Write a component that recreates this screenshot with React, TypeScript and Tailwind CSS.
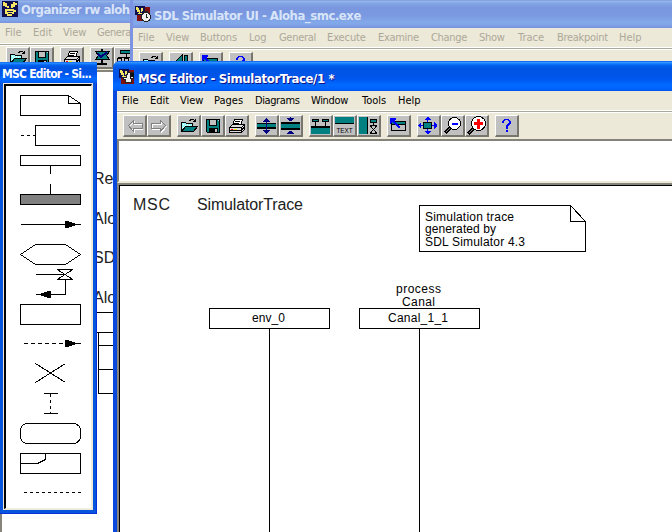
import React from "react";

type Item = { label: string; cls: string };

const activeTitle =
  "bg-[linear-gradient(#0058ee_0%,#3593ff_5%,#127dff_9%,#0262ee_15%,#0054e3_25%,#0055eb_56%,#005bf5_66%,#026afe_78%,#0062ff_94%,#0052e6_100%)]";
const idleTitle =
  "bg-[linear-gradient(#7e9ee3_0%,#97b4e9_6%,#82a5e4_12%,#7996de_28%,#7b99e1_56%,#82a9e9_80%,#80a5e7_88%,#7b96e1_96%,#7a93df_100%)]";
const face = "bg-[#ece9d8]";

function Menu({ items, dim, pad }: { items: Item[]; dim?: boolean; pad: string }) {
  return (
    <div
      className={`flex shrink-0 items-center overflow-hidden whitespace-nowrap font-['DejaVu_Sans_Condensed','DejaVu_Sans',sans-serif] text-[11px] [font-stretch:condensed] ${face} ${pad} ${
        dim ? "text-[#aca899]" : "text-black"
      }`}
    >
      {items.map((m) => (
        <span key={m.label} className={`shrink-0 ${m.cls}`}>
          {m.label}
        </span>
      ))}
    </div>
  );
}

function Rule() {
  return <div className="h-[3px] shrink-0 border-y border-white bg-[#aca899]" />;
}

function Btn({ children }: { children: React.ReactNode }) {
  return (
    <div className="h-[22px] w-6 shrink-0 border-t border-r-2 border-b-2 border-l border-t-white border-r-[#77756c] border-b-[#77756c] border-l-white bg-[#c0c0c0]">
      <svg className="-mt-px -ml-px block h-[22px] w-6" viewBox="0 0 24 22" shapeRendering="crispEdges">
        {children}
      </svg>
    </div>
  );
}

const Back = () => (
  <g fill="none">
    <path d="M6.500 11.500l5-5v3h8v5h-8v3z" stroke="#fff" />
    <path d="M5.500 10.500l5-5v3h9v5h-9v3z" stroke="#808080" />
  </g>
);
const Forward = () => (
  <g fill="none">
    <path d="M19.500 11.500l-5-5v3h-9v5h9v3z" stroke="#fff" />
    <path d="M18.500 10.500l-5-5v3h-9v5h9v3z" stroke="#808080" />
  </g>
);
const Open = () => (
  <g>
    <path d="M4.500 16.500v-9h4l1 1h6v3" fill="#9ff" stroke="#000" />
    <path d="M4.500 16.500l4-5h12l-4 5z" fill="#008080" stroke="#000" />
    <path d="M12.500 5.500l2-1h2l2 2M18.500 4v3M16 6.500h3" fill="none" stroke="#000" />
    <path d="M6 9h1v1H6zM8 10h1v1H8zM10 9h1v1h-1zM6 12h1v1H6zM12 10h1v1h-1z" fill="#fff" />
  </g>
);
const Save = () => (
  <g>
    <path d="M5.500 4.500h13v13H6.500l-1-1z" fill="#008080" stroke="#000" />
    <path d="M8.500 4.500h7v6h-7z" fill="#c0c0c0" stroke="#000" />
    <path d="M8 13h9v5H8z" fill="#000" />
    <path d="M14 14h2v3h-2zM17 5h1v1h-1z" fill="#c0c0c0" />
  </g>
);
const Print = () => (
  <g stroke="#000">
    <path d="M7.500 10.500l2-6h8l-2 6z" fill="#fff" />
    <path d="M10 6.500h5M9 8.500h5" />
    <path d="M4.500 12.500l3-3h12v5l-3 3h-12z" fill="#ddd" />
    <path d="M4.500 12.500h12l3-3M16.500 12.500v5M5 15.500h11l3-3" fill="none" />
    <path d="M6 14.500h2" stroke="#f00" />
    <path d="M9 14.500h3" stroke="#ff0" />
  </g>
);
const Narrow = () => (
  <g>
    <path d="M2 8h19v6H2z" fill="#000" />
    <path d="M2 9h19v3H2z" fill="#008080" />
    <path d="M11 3h1v16h-1zM10 4h3v1h-3zM9 5h5v1H9zM8 6h7v1H8zM8 15h7v1H8zM9 16h5v1H9zM10 17h3v1h-3z" fill="#000080" />
  </g>
);
const Widen = () => (
  <g>
    <path d="M2 7h19v8H2z" fill="#000" />
    <path d="M2 9h19v4H2z" fill="#008080" />
    <path d="M11 2h1v4h-1zM8 3h7v1H8zM9 4h5v1H9zM10 5h3v1h-3zM11 16h1v3h-1zM10 16h3v1h-3zM9 17h5v1H9zM8 18h7v1H8z" fill="#000080" />
  </g>
);
const Instances = () => (
  <g>
    <path d="M3.500 4.500h6v2h-6zM13.500 4.500h6v2h-6z" fill="#008080" stroke="#000" />
    <path d="M6.500 7v4M16.500 7v4" stroke="#000" />
    <path d="M2 13h19v6H2z" fill="#008080" />
    <path d="M2 11h19v2H2z" />
  </g>
);
const TextMode = () => (
  <g>
    <path d="M2 2h19v6H2z" fill="#008080" />
    <path d="M2 8h19v1H2z" />
    <text x="3.500" y="17.500" fontSize="7.500" fontFamily="Liberation Sans, sans-serif" textLength="16" lengthAdjust="spacingAndGlyphs">
      TEXT
    </text>
  </g>
);
const Side = () => (
  <g>
    <path d="M2 2h8v17H2z" fill="#008080" />
    <path d="M10 2h1v17h-1z" />
    <path d="M13.500 4.500h6v3h-6z" fill="#008080" stroke="#000" />
    <path d="M16.500 8v2M13 10.500h7M13 18.500h7M13.500 11l6 7M19.500 11l-6 7" stroke="#000" fill="none" />
  </g>
);
const Jump = () => (
  <g>
    <path d="M4.500 6.500h14v9h-14z" fill="#c0c0c0" stroke="#000" />
    <path d="M5 7h13v2H5z" fill="#008080" />
    <path d="M5 9.500h13" stroke="#000" />
    <path d="M3 3h6v1L7 6l6 5v2h-1L5 7 4 9H3z" fill="#00f" />
  </g>
);
const Fit = () => (
  <g>
    <path d="M6.500 7.500h8v6h-8z" fill="#008080" stroke="#000" />
    <path d="M10 2h1l3 3h-3v2h-1V5H7zM10 14h1v2h3l-3 3h-1l-3-3h3zM1 10l3-3v3h2v1H4v3l-3-3zM20 10l-3-3v3h-2v1h2v3l3-3z" fill="#00f" />
  </g>
);
const ZoomOut = () => (
  <g>
    <path d="M4 18l5-5" stroke="#000" strokeWidth="3" />
    <path d="M4.500 17.500l4-4" stroke="#808080" />
    <circle cx="13.500" cy="8.500" r="6" fill="#fff" stroke="#000" />
    <path d="M11 8h6v2h-6z" fill="#00f" />
  </g>
);
const ZoomIn = () => (
  <g>
    <path d="M3 19l6-6" stroke="#000" strokeWidth="3" />
    <path d="M3.500 18.500l5-5" stroke="#808080" />
    <circle cx="13.500" cy="8.500" r="7" fill="#fff" stroke="#000" />
    <path d="M12 4h3v3h3v3h-3v4h-3v-4H9V7h3z" fill="#f00" />
  </g>
);
const Help = () => (
  <path d="M8 5h1V4h5v1h1v1h1v3h-1v1h-1v1h-1v3h-2v-4h1V9h1V8h1V6h-1V5h-3v1H9v2H7V6h1zM11 15h2v2h-2z" fill="#00f" />
);
const Check = () => (
  <g>
    <path d="M5.500 4.500h14l-3 4 3 4h-14l3-4z" fill="#008080" stroke="#000" />
    <path d="M12 2v3M12 13v4M7 17h10" stroke="#000" strokeWidth="2" />
    <path d="M8 7l3 3 6-5" stroke="#000080" strokeWidth="2" fill="none" />
  </g>
);
const Tree = () => (
  <g stroke="#000" fill="#008080">
    <path d="M6.500 3.500h11v3h-11zM12 7v3M4 10.500h16" />
    <path d="M3.500 11.500h4v4h-4zM10.500 11.500h4v4h-4z" fill="#c0c0c0" />
  </g>
);
const Step = () => (
  <g>
    <path d="M13 3v15L5 11z" fill="#008080" stroke="#000" />
    <path d="M15.500 3.500h3v14h-3z" fill="#008080" stroke="#000" />
  </g>
);

function AppIcon({ kind }: { kind: "hand" | "clock" | "face" }) {
  return (
    <svg className="h-4 w-4 shrink-0" viewBox="0 0 16 16" shapeRendering="crispEdges">
      {kind === "hand" ? (
        <g>
          <path d="M0 0h16v16H0z" fill="#101050" />
          <path d="M1 1h2v1h2v2h2v3H5V6H3V5H1zM9 3h2V1h2v1h2v2h-2v2h-2v1H9zM3 8h9v1h2v2h-2v2h-2v2H5v-2H3z" fill="#f5e663" />
          <path d="M5 10.500h6M6 12.500h4M5 3h1v1H5z" stroke="#101050" />
        </g>
      ) : (
        <g>
          <path d="M0 0h10v9H0z" fill="#101050" />
          <path d="M10 1h5v14H2V9h8z" fill="#801010" />
          <path d="M1 1h2v1h1v2h1v3H4V6H2V4H1zM6 2h2v3H7v1H6zM3 7h5v1H3z" fill="#f5e663" />
          {kind === "clock" ? (
            <g>
              <circle cx="11" cy="11" r="4.500" fill="#eee" stroke="#222" />
              <path d="M11 8v3h2M9 5h4M11 5v2" stroke="#222" fill="none" />
            </g>
          ) : (
            <g>
              <path d="M8.500 3.500h6v6h-2v4h-6v-3h-2v-2h3z" fill="#eee" stroke="#222" />
              <path d="M11 4h4v4h-3v2h-1z" fill="#111" />
            </g>
          )}
        </g>
      )}
    </svg>
  );
}

const titleFont =
  "whitespace-nowrap font-['DejaVu_Sans_Condensed','DejaVu_Sans',sans-serif] font-bold [font-stretch:condensed]";

const mainMenu: Item[] = [
  { label: "File", cls: "w-7" },
  { label: "Edit", cls: "w-[30px]" },
  { label: "View", cls: "w-[34px]" },
  { label: "Pages", cls: "w-[41px]" },
  { label: "Diagrams", cls: "w-[56px] tracking-[-0.4px]" },
  { label: "Window", cls: "w-[51px] tracking-[-0.35px]" },
  { label: "Tools", cls: "w-9" },
  { label: "Help", cls: "" },
];
const simMenu: Item[] = [
  { label: "File", cls: "w-7" },
  { label: "View", cls: "w-[34px]" },
  { label: "Buttons", cls: "w-[49px] tracking-[-0.2px]" },
  { label: "Log", cls: "w-[30px]" },
  { label: "General", cls: "w-12 tracking-[-0.3px]" },
  { label: "Execute", cls: "w-[51px] tracking-[-0.1px]" },
  { label: "Examine", cls: "w-[53px] tracking-[-0.3px]" },
  { label: "Change", cls: "w-12 tracking-[-0.3px]" },
  { label: "Show", cls: "w-[39px] tracking-[-0.3px]" },
  { label: "Trace", cls: "w-[39px]" },
  { label: "Breakpoint", cls: "w-[62px] tracking-[-0.3px]" },
  { label: "Help", cls: "" },
];
const orgMenu: Item[] = [
  { label: "File", cls: "w-7" },
  { label: "Edit", cls: "w-[30px]" },
  { label: "View", cls: "w-[34px]" },
  { label: "General", cls: "tracking-[-0.4px]" },
];

function Organizer() {
  return (
    <section className="absolute top-0 left-0 flex h-[532px] w-[140px] flex-col overflow-hidden bg-[#ece9d8]">
      <div className={`flex h-[23px] shrink-0 items-start gap-[3px] pt-px pl-0.5 ${idleTitle}`}>
        <AppIcon kind="hand" />
        <span className={`${titleFont} mt-px text-[13px] leading-4 tracking-[-0.55px] text-[#d8e4f8]`}>Organizer rw aloh</span>
      </div>
      <Menu items={orgMenu} dim pad="h-5 pl-[5px]" />
      <Rule />
      <div className="flex h-6 shrink-0 pt-px pl-1.5">
        <Btn><Open /></Btn>
        <Btn><Save /></Btn>
        <div className="w-1.5" />
        <Btn><Print /></Btn>
        <div className="w-1.5" />
        <Btn><Check /></Btn>
        <Btn><Tree /></Btn>
      </div>
      <div className="flex-1 border-t-2 border-l-2 border-[#85837a] bg-white">
        <svg
          className="block h-[460px] w-[138px] font-['Liberation_Sans',sans-serif] text-[16px]"
          viewBox="2 72 138 460"
          fill="none"
          stroke="#000"
          shapeRendering="crispEdges"
        >
          <g fill="#222" stroke="none">
            <text x="93" y="184">Re</text>
            <text x="93" y="224">Alo</text>
            <text x="93" y="263">SD</text>
            <text x="93" y="303">Alo</text>
          </g>
          <path d="M95 312.500h40M95 332.500h40M98.500 332v61.500H140M98 345.500h40M98 369.500h40" />
        </svg>
      </div>
    </section>
  );
}

function Simulator() {
  return (
    <section className="absolute top-0 left-[130px] flex h-[80px] w-[542px] flex-col overflow-hidden border-l-[3px] border-[#7b93e0] bg-[#ece9d8]">
      <div className={`flex h-7 shrink-0 items-start gap-[3px] pt-1.5 pl-0.5 ${idleTitle}`}>
        <AppIcon kind="clock" />
        <span className={`${titleFont} mt-0.5 text-[13px] leading-4 tracking-[-0.47px] text-[#d8e4f8]`}>SDL Simulator UI - Aloha_smc.exe</span>
      </div>
      <Menu items={simMenu} dim pad="h-[19px] pt-0.5 pl-[5px]" />
      <Rule />
      <div className="flex gap-1.5 pt-0.5 pl-1.5">
        <Btn><Open /></Btn>
        <Btn><Step /></Btn>
        <Btn><Jump /></Btn>
        <Btn><Help /></Btn>
      </div>
    </section>
  );
}

function Palette() {
  return (
    <section className="absolute top-[62px] left-0 flex h-[452px] w-[97px] flex-col bg-[#0831d9]">
      <div className={`h-[21px] shrink-0 overflow-hidden pl-[2px] ${activeTitle}`}>
        <span className={`${titleFont} block text-[12px] leading-[24px] tracking-[-0.75px] text-white`}>MSC Editor - Si...</span>
      </div>
      <div className="mr-[1px] mb-[1px] flex flex-1 border-r-[3px] border-b-[3px] border-l-[3px] border-[#0855dd]">
        <div className="flex-1 border border-[#ece9d8] bg-white">
          <div className="h-full border-t-2 border-r border-b border-l-2 border-t-black border-r-[#f1efe2] border-b-[#f1efe2] border-l-black">
            <svg className="block h-[421px] w-[85px]" viewBox="6 86 85 421" fill="none" stroke="#000" shapeRendering="crispEdges">
              <path d="M20.500 95.500h48l12 8v12h-60zM68.500 95.500v8h12" />
              <path d="M80 125.500H35.500v20H80" />
              <path d="M21 135.500h14" strokeDasharray="3 3" />
              <path d="M20.500 155.500h60v10h-60zM50.500 166v8M50.500 184v10" />
              <path d="M20.500 194.500h60v10h-60z" fill="#808080" />
              <path d="M21 224.500h60" />
              <path d="M65 221v7h3l8-3v-1l-8-3z" fill="#000" stroke="none" />
              <path d="M20.500 254.500l15-10h30l15 10-15 10h-30z" />
              <path d="M36 274.500h29M57 269.500h16M57 279.500h16M58 270l14 9M72 270l-14 9M65.500 279v15.500H36" />
              <path d="M51 291v7h-3l-8-3v-1l8-3z" fill="#000" stroke="none" />
              <path d="M20.500 304.500h60v20h-60z" />
              <path d="M24 343.500h57" strokeDasharray="4 3" />
              <path d="M65 340v7h3l8-3h5v-1h-5l-8-3z" fill="#000" stroke="none" />
              <path d="M35.500 363.500l30 19M65.500 363.500l-30 19" />
              <path d="M44 393.500h14M44 413.500h14" />
              <path d="M50.500 394v19" strokeDasharray="3 3" />
              <rect x="20.500" y="423.500" width="60" height="20" rx="7" />
              <path d="M20.500 453.500h60v20h-60zM20.500 463.500h17l8-4v-6" />
              <path d="M24 492.500h57" strokeDasharray="3 3" />
            </svg>
          </div>
        </div>
      </div>
    </section>
  );
}

function Diagram() {
  return (
    <svg
      className="block h-[346px] w-[552px] font-['Liberation_Sans',sans-serif] text-[12px]"
      viewBox="120 186 552 346"
      fill="none"
      stroke="#000"
      shapeRendering="crispEdges"
    >
      <path d="M419.500 205.500h151l15 16v30h-166zM570.500 205.500v16h15" />
      <path d="M209.500 308.500h120v20h-120zM359.500 308.500h120v20h-120zM269.500 329v210M419.500 329v210" />
      <g fill="#000" stroke="none">
        <text x="133" y="210" fontSize="16" textLength="37" fill="#222">MSC</text>
        <text x="197" y="210" fontSize="16" textLength="106" fill="#222">SimulatorTrace</text>
        <text x="425" y="221" textLength="89">Simulation trace</text>
        <text x="425" y="233" textLength="71">generated by</text>
        <text x="425" y="246" textLength="100">SDL Simulator 4.3</text>
        <text x="252" y="322" textLength="33">env_0</text>
        <text x="396" y="293" textLength="45">process</text>
        <text x="402" y="306" textLength="33">Canal</text>
        <text x="388" y="322" textLength="60">Canal_1_1</text>
      </g>
    </svg>
  );
}

function Editor() {
  return (
    <section className="absolute top-[61px] left-[113px] flex h-[471px] w-[559px] flex-col rounded-tl-[7px] border-l-4 border-[#0848dc] bg-[#0848dc]">
      <div className={`-ml-1 flex h-[30px] shrink-0 items-center gap-[3px] rounded-tl-[7px] pt-0.5 pl-1.5 ${activeTitle}`}>
        <AppIcon kind="face" />
        <span className={`${titleFont} pt-[3px] text-[13px] tracking-[-0.36px] text-white [text-shadow:1px_1px_#0f1089]`}>
          MSC Editor - SimulatorTrace/1 *
        </span>
      </div>
      <Menu items={mainMenu} pad="h-[19px] pt-0.5 pl-[5px]" />
      <Rule />
      <div className={`flex h-[26px] shrink-0 gap-1.5 pt-0.5 pl-1.5 ${face}`}>
        <div className="flex"><Btn><Back /></Btn><Btn><Forward /></Btn></div>
        <div className="flex"><Btn><Open /></Btn><Btn><Save /></Btn><Btn><Print /></Btn></div>
        <div className="flex"><Btn><Narrow /></Btn><Btn><Widen /></Btn></div>
        <div className="flex"><Btn><Instances /></Btn><Btn><TextMode /></Btn><Btn><Side /></Btn></div>
        <Btn><Jump /></Btn>
        <div className="flex"><Btn><Fit /></Btn><Btn><ZoomOut /></Btn><Btn><ZoomIn /></Btn></div>
        <Btn><Help /></Btn>
      </div>
      <div className="h-[44px] shrink-0 border-t-2 border-b-2 border-l-2 border-t-[#85837a] border-b-[#ece9d8] border-l-[#85837a] bg-white" />
      <div className="flex-1 border-t-2 border-l-2 border-[#85837a]">
        <div className="h-full border-t border-l border-black bg-white">
          <Diagram />
        </div>
      </div>
    </section>
  );
}

export default function App() {
  return (
    <main className="relative h-[532px] w-[672px] overflow-hidden bg-white">
      <Organizer />
      <Simulator />
      <Editor />
      <Palette />
    </main>
  );
}
